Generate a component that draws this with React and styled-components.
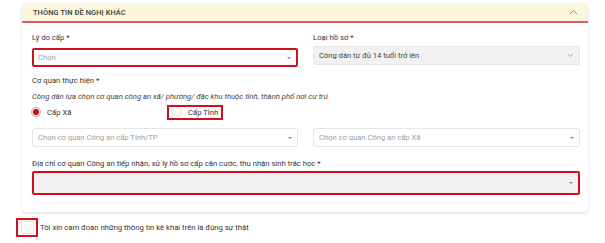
import React from "react";
import styled, { createGlobalStyle } from "styled-components";

const Global = createGlobalStyle`
  html, body { margin: 0; padding: 0; background: #fff; }
  body { font-family: Roboto, "Noto Sans", sans-serif; color: #333; }
  * { box-sizing: border-box; }
`;

const Page = styled.div`
  width: 605px;
  height: 243px;
  padding: 3px 17px 0 22px;
  overflow: hidden;
`;

const Card = styled.section`
  background: #fff;
  border-radius: 4px;
  box-shadow: 0 1px 3px rgba(0, 0, 0, 0.16);
  overflow: hidden;
`;

const Header = styled.div`
  height: 20px;
  background: #fdf6df;
  border-bottom: 2px solid #d9625a;
  display: flex;
  align-items: center;
  justify-content: space-between;
  padding: 0 10px 0 11px;
  font-size: 7.4px;
  font-weight: 500;
  color: #3a3a3a;
  letter-spacing: 0.1px;
`;

const Body = styled.div`
  padding: 9px 8px 17px 10px;
  display: flex;
  flex-direction: column;
`;

const Grid = styled.div`
  display: grid;
  grid-template-columns: 266px 267px;
  column-gap: 15px;
  margin-top: ${(p) => p.$mt || 0}px;
`;

const Field = styled.div`
  display: flex;
  flex-direction: column;
`;

const Label = styled.div`
  font-size: 7.7px;
  line-height: 11px;
  color: #333;
  margin-top: ${(p) => p.$mt || 0}px;
  margin-bottom: ${(p) => p.$mb || 3}px;
`;

const Hint = styled.div`
  font-size: 7.7px;
  font-style: italic;
  color: #444;
  line-height: 11px;
  margin-top: 2px;
`;

const Select = styled.div`
  height: ${(p) => p.$h || 19}px;
  border: ${(p) => (p.$red ? "2px solid #d0101b" : "1px solid #e6e6e6")};
  background: ${(p) => (p.$grey ? "#f1f1f1" : "#fff")};
  border-radius: 2px;
  display: flex;
  align-items: center;
  justify-content: space-between;
  padding: 0 5px 0 ${(p) => (p.$red ? 4 : 5)}px;
  font-size: 7.6px;
  color: ${(p) => (p.$dark ? "#444" : "#a0a0a0")};
  margin-top: ${(p) => p.$mt || 0}px;
`;

const Caret = styled.span`
  width: 0;
  height: 0;
  border-left: 2px solid transparent;
  border-right: 2px solid transparent;
  border-top: 2.5px solid #888;
`;

const RadioRow = styled.div`
  display: flex;
  align-items: center;
  height: 14px;
  margin-top: 3px;
`;

const RadioItem = styled.label`
  display: flex;
  align-items: center;
  gap: 6px;
  font-size: 7.7px;
  color: #333;
  height: 15px;
  width: ${(p) => (p.$w ? `${p.$w}px` : "auto")};
  padding: 0 ${(p) => (p.$boxed ? "3px" : "0")} 0 ${(p) => (p.$boxed ? "3px" : "0")};
  border: ${(p) => (p.$boxed ? "2px solid #d0101b" : "none")};
  margin-left: ${(p) => p.$ml || 0}px;
`;

const RadioDot = styled.span`
  width: 10px;
  height: 10px;
  border-radius: 50%;
  border: 1px solid ${(p) => (p.$on ? "#f1a5a5" : "#e0e0e0")};
  background: ${(p) => (p.$on ? "#fbe3e3" : "#fff")};
  display: flex;
  align-items: center;
  justify-content: center;
  &::after {
    content: "";
    width: 6px;
    height: 6px;
    border-radius: 50%;
    background: ${(p) => (p.$on ? "#b3141c" : "transparent")};
  }
`;

const Footer = styled.div`
  display: flex;
  align-items: center;
  margin: 6px 0 0 -6px;
  gap: 2px;
`;

const CheckFrame = styled.div`
  width: 22px;
  height: 19px;
  border: 2px solid #d0101b;
  display: flex;
  align-items: center;
  justify-content: center;
`;

const CheckBox = styled.span`
  width: 13px;
  height: 13px;
  border: 1px solid #e4e4e4;
  border-radius: 2px;
  background: #fafafa;
`;

const FooterText = styled.span`
  font-size: 7.7px;
  color: #333;
`;

const ChevronUp = () => (
  <svg width="9" height="6" viewBox="0 0 9 6">
    <path d="M1 5 L4.5 1.5 L8 5" fill="none" stroke="#888" strokeWidth="1" />
  </svg>
);

const ChevronDown = () => (
  <svg width="7" height="5" viewBox="0 0 7 5">
    <path d="M1 1 L3.5 3.5 L6 1" fill="none" stroke="#999" strokeWidth="0.9" />
  </svg>
);

export default function App() {
  return (
    <>
      <Global />
      <Page>
        <Card>
          <Header>
            <span>THÔNG TIN ĐỀ NGHỊ KHÁC</span>
            <ChevronUp />
          </Header>
          <Body>
            <Grid>
              <Field>
                <Label $mb={4}>Lý do cấp *</Label>
                <Select $red $mt={1}>
                  <span>Chọn</span>
                  <Caret />
                </Select>
              </Field>
              <Field>
                <Label $mb={3}>Loại hồ sơ *</Label>
                <Select $grey $dark>
                  <span>Công dân từ đủ 14 tuổi trở lên</span>
                  <ChevronDown />
                </Select>
              </Field>
            </Grid>
            <Label $mt={8} $mb={0}>Cơ quan thực hiện *</Label>
            <Hint>Công dân lựa chọn cơ quan công an xã/ phường/ đặc khu thuộc tỉnh, thành phố nơi cư trú</Hint>
            <RadioRow>
              <RadioItem $ml={-1} $w={136}>
                <RadioDot $on />
                Cấp Xã
              </RadioItem>
              <RadioItem $boxed>
                <RadioDot />
                Cấp Tỉnh
              </RadioItem>
            </RadioRow>
            <Grid $mt={9}>
              <Select>
                <span>Chọn cơ quan Công an cấp Tỉnh/TP</span>
                <Caret />
              </Select>
              <Select>
                <span>Chọn cơ quan Công an cấp Xã</span>
                <Caret />
              </Select>
            </Grid>
            <Label $mt={11} $mb={2}>
              Địa chỉ cơ quan Công an tiếp nhận, xử lý hồ sơ cấp căn cước, thu nhận sinh trắc học *
            </Label>
            <Select $red $grey $h={24}>
              <span />
              <Caret />
            </Select>
          </Body>
        </Card>
        <Footer>
          <CheckFrame>
            <CheckBox />
          </CheckFrame>
          <FooterText>Tôi xin cam đoan những thông tin kê khai trên là đúng sự thật</FooterText>
        </Footer>
      </Page>
    </>
  );
}
